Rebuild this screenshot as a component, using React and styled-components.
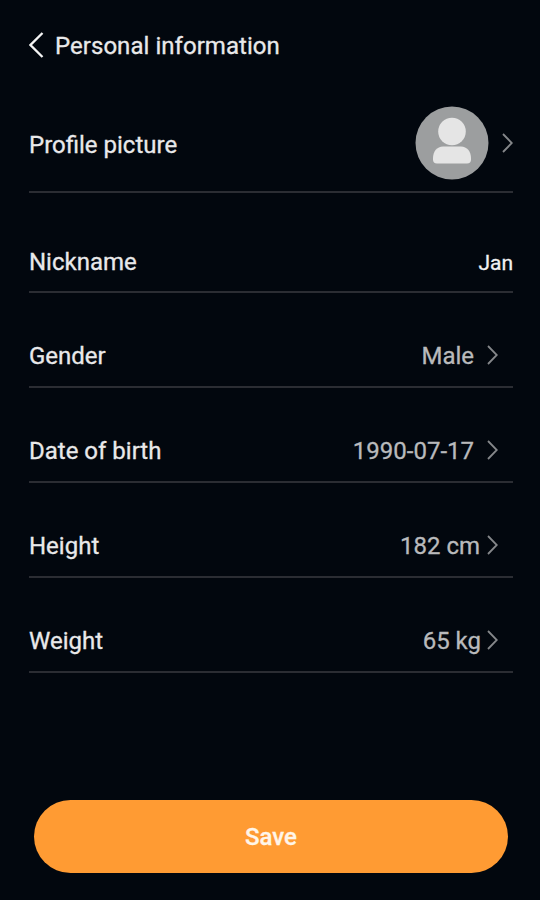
import React from "react";
import styled, { createGlobalStyle } from "styled-components";

const GlobalStyle = createGlobalStyle`
  * {
    box-sizing: border-box;
  }

  body {
    margin: 0;
    background: #02070e;
  }
`;

const Screen = styled.main`
  display: flex;
  flex-direction: column;
  width: 540px;
  height: 900px;
  padding: 0 27px 27px 29px;
  background: #02070e;
  color: #e9e9ea;
  font-family: Roboto, "Liberation Sans", sans-serif;
  font-size: 24px;
  line-height: 28px;
  -webkit-text-stroke: 0.3px currentColor;
  overflow: hidden;
`;

const Header = styled.header`
  display: flex;
  align-items: center;
  gap: 11px;
  height: 93px;
`;

const BackButton = styled.button`
  display: flex;
  padding: 0 0 3px;
  border: 0;
  background: none;
  color: #f4f4f4;
`;

const Title = styled.h1`
  margin: 0;
  padding-bottom: 1px;
  font-size: 24px;
  font-weight: 400;
  letter-spacing: 0.04px;
`;

const List = styled.ul`
  margin: 0;
  padding: 0;
  list-style: none;
`;

const Row = styled.li`
  display: flex;
  align-items: flex-end;
  justify-content: space-between;
  height: ${(props) => props.$height || 95}px;
  padding-bottom: ${(props) => props.$bottom || 16}px;
  border-bottom: 2px solid #2b2d33;
`;

const PictureRow = styled(Row)`
  align-items: center;
  padding: 2px 0 0;
`;

const Label = styled.span`
  padding-top: ${(props) => props.$drop || 0}px;
`;

const Value = styled.span`
  display: flex;
  align-items: center;
  gap: ${(props) => props.$gap || 0}px;
  padding-right: ${(props) => (props.$inset ? 15 : 0)}px;
  color: #b9babc;
`;

const Nickname = styled.span`
  color: #f1f1f1;
  font-size: 21px;
  line-height: 25px;
`;

const Arrow = styled.svg`
  display: block;
  margin-bottom: ${(props) => props.$lift || 0}px;
  fill: none;
  stroke: #85878a;
  stroke-width: 1.8;
`;

const SaveButton = styled.button`
  height: 73px;
  margin: auto 5px 0;
  padding: 0;
  border: 0;
  border-radius: 37px;
  background: #ff9b33;
  color: #fff6ea;
  font: 500 24px/28px Roboto, "Liberation Sans", sans-serif;
`;

const Chevron = ({ lift }) => (
  <Arrow width="11" height="20" viewBox="0 0 11 20" $lift={lift}>
    <path d="M1 1L9.8 10L1 19" />
  </Arrow>
);

const Avatar = () => (
  <svg width="74" height="74" viewBox="0 0 74 74">
    <circle cx="37" cy="37" r="36.5" fill="#9c9e9f" />
    <circle cx="37" cy="25.5" r="13.8" fill="#e5e5e5" />
    <path
      d="M28 40.5H46C52 40.5 56 45.5 56 52V53.5Q56 57.5 52 57.5H22Q18 57.5 18 53.5V52C18 45.5 22 40.5 28 40.5Z"
      fill="#e5e5e5"
    />
  </svg>
);

const fields = [
  { label: "Gender", value: "Male", gap: 13 },
  { label: "Date of birth", value: "1990-07-17", gap: 13 },
  { label: "Height", value: "182 cm", gap: 7 },
  { label: "Weight", value: "65 kg", gap: 6 },
];

const App = () => {
  return (
    <>
      <GlobalStyle />
      <Screen>
        <Header>
          <BackButton aria-label="Back">
            <svg width="15" height="26" viewBox="0 0 15 26" fill="none">
              <path d="M13.5 1L1.5 13L13.5 25" stroke="currentColor" strokeWidth="2.3" />
            </svg>
          </BackButton>
          <Title>Personal information</Title>
        </Header>
        <List>
          <PictureRow $height={100}>
            <Label $drop={4}>Profile picture</Label>
            <Value $gap={13}>
              <Avatar />
              <Chevron />
            </Value>
          </PictureRow>
          <Row $height={100} $bottom={15}>
            <Label>Nickname</Label>
            <Nickname>Jan</Nickname>
          </Row>
          {fields.map((field) => (
            <Row key={field.label}>
              <Label>{field.label}</Label>
              <Value $inset $gap={field.gap}>
                {field.value}
                <Chevron lift={3} />
              </Value>
            </Row>
          ))}
        </List>
        <SaveButton>Save</SaveButton>
      </Screen>
    </>
  );
};

export default App;
